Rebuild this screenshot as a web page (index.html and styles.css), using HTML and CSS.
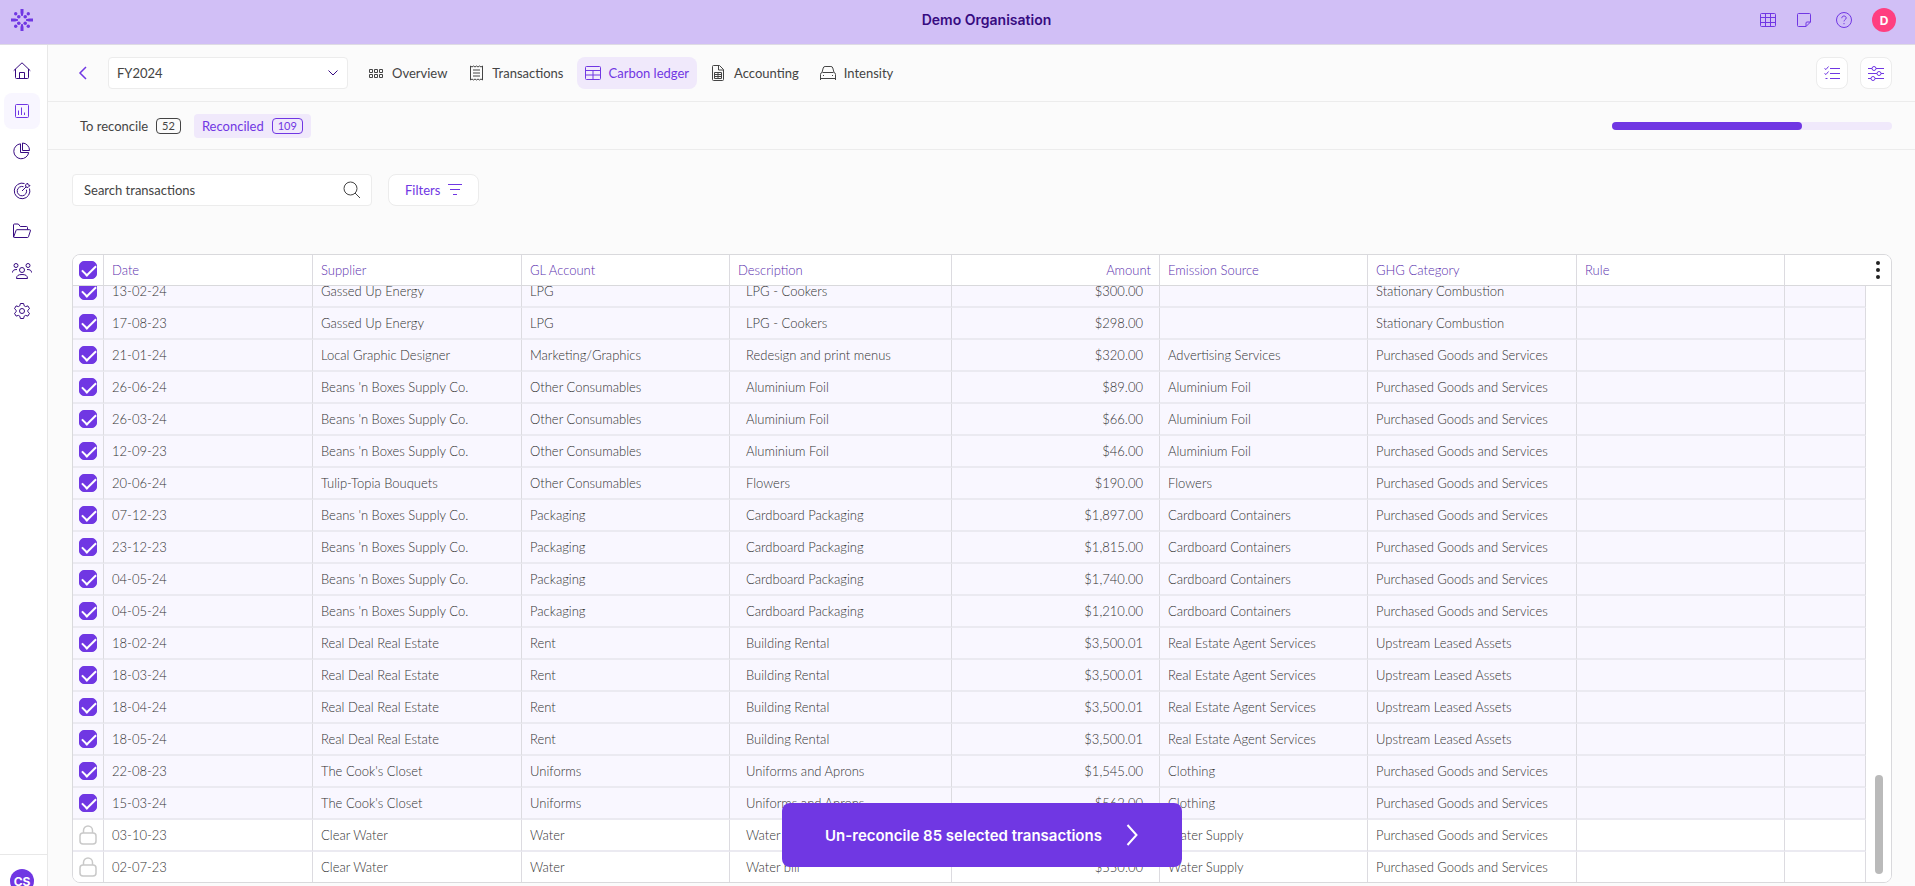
FILE: index.html
```html
<!DOCTYPE html>
<html lang="en">
<head>
  <meta charset="UTF-8" />
  <meta name="viewport" content="width=device-width, initial-scale=1" />
  <title>Carbon ledger</title>
  <link rel="stylesheet" href="styles.css">
</head>
<body>

<header class="topbar">
  <a class="logo" href="#" aria-label="Home">
    <svg width="22" height="22" viewBox="0 0 22 22" fill="currentColor">
      <path d="M9.500 0h3v4l-.8 3h-1.400l-.8-3zM9.500 22h3v-4l-.8-3h-1.400l-.8 3zM0 9.500h4l3 .8v1.400l-3 .8H0zM22 9.500h-4l-3 .8v1.400l3 .8h4z"/>
      <circle cx="4.700" cy="4.700" r="1.700"/><circle cx="17.300" cy="4.700" r="1.700"/>
      <circle cx="4.700" cy="17.300" r="1.700"/><circle cx="17.300" cy="17.300" r="1.700"/>
      <circle cx="7.800" cy="7.800" r="1.800"/><circle cx="14.200" cy="7.800" r="1.800"/>
      <circle cx="7.800" cy="14.200" r="1.800"/><circle cx="14.200" cy="14.200" r="1.800"/>
    </svg>
  </a>
  <h1 class="org">Demo Organisation</h1>
  <div class="actions">
    <button type="button" aria-label="Data tables">
      <svg width="16" height="16" viewBox="0 0 16 16"><rect x=".5" y="1.500" width="15" height="13" rx="1"/><path d="M.5 5.500h15M.5 10.500h15M5.500 1.500v13M10.500 1.500v13"/></svg>
    </button>
    <button type="button" aria-label="Notes">
      <svg width="20" height="16" viewBox="0 0 20 16"><path d="M2.500 1.500h11a1 1 0 0 1 1 1V10l-4.500 4.500H2.500a1 1 0 0 1-1-1v-11a1 1 0 0 1 1-1zM14.500 10h-3.500a1 1 0 0 0-1 1v3.500"/></svg>
    </button>
    <button type="button" aria-label="Help">
      <svg width="16" height="16" viewBox="0 0 16 16"><circle cx="8" cy="8" r="7.500"/><path d="M5.800 6.200c0-1.400 1-2.200 2.200-2.200s2.200.8 2.200 2c0 1.600-2.200 1.700-2.200 3.400M8 11v1.200"/></svg>
    </button>
    <button type="button" class="avatar avatar-user">D</button>
  </div>
</header>

<div class="layout">
  <nav class="sidebar">
    <div class="side-links">
      <a href="#" aria-label="Home"><svg width="18" height="18" viewBox="0 0 18 18"><path d="M.7 8.700 9 .8l8.300 7.900M2.500 7v8.500a1 1 0 0 0 1 1h11a1 1 0 0 0 1-1V7M6.500 16.500v-6h5v6"/></svg></a>
      <a href="#" class="active" aria-label="Reports"><svg width="18" height="18" viewBox="0 0 18 18"><rect x="2.500" y="2.500" width="13" height="13" rx="1"/><path d="M5.500 8.500v4.500M8.500 5.500v7.500M11.500 10.500v2.500" /></svg></a>
      <a href="#" aria-label="Breakdown"><svg width="18" height="18" viewBox="0 0 18 18"><path d="M7.500 1.800a7.500 7.500 0 1 0 8.200 8.700H7.500z"/><path d="M9.500 1v7.500h7A7.300 7.300 0 0 0 9.500 1z"/></svg></a>
      <a href="#" aria-label="Targets"><svg width="18" height="18" viewBox="0 0 18 18"><path d="M11.500 1.500A7.800 7.800 0 1 0 16.500 6.500"/><path d="M10.500 4.700a4.700 4.700 0 1 0 2.900 3M9 9l4-4M13 5l-.5-2L14.500 1l.6 1.900L17 3.500 15 5.500z"/></svg></a>
      <a href="#" aria-label="Documents"><svg width="18" height="18" viewBox="0 0 18 18"><path d="M.5 15V3a1 1 0 0 1 1-1h3.800l2 2.500h6.200a1 1 0 0 1 1 1v2M.6 15.200 3 8.500a1 1 0 0 1 1-.8h12.500a.9.900 0 0 1 .9 1.200l-1.900 5.800a1 1 0 0 1-1 .8H1.200a.6.600 0 0 1-.6-.3z"/></svg></a>
      <a href="#" aria-label="Team"><svg width="20" height="18" viewBox="0 0 20 18"><circle cx="10" cy="8" r="2.500"/><circle cx="4" cy="3.500" r="2"/><circle cx="16" cy="3.500" r="2"/><path d="M4.500 16.500c0-3 2-4 5.500-4s5.500 1 5.500 4zM.5 10.500c0-2.200 1.500-3 4.500-3M19.500 10.500c0-2.200-1.500-3-4.500-3"/></svg></a>
      <a href="#" aria-label="Settings"><svg width="18" height="18" viewBox="0 0 18 18"><circle cx="9" cy="9" r="2.500"/><path d="M7.400 1.500h3.200l.6 2.300 1.400.8 2.300-.7 1.600 2.800-1.700 1.600v1.400l1.700 1.600-1.600 2.800-2.300-.7-1.400.8-.6 2.300H7.400l-.6-2.300-1.400-.8-2.300.7-1.600-2.800 1.700-1.600V8.300L1.500 6.700l1.600-2.800 2.300.7 1.400-.8z"/></svg></a>
    </div>
    <div class="side-footer">
      <button type="button" class="avatar">CS</button>
    </div>
  </nav>

  <main class="main">
    <div class="toolbar">
      <a class="back" href="#" aria-label="Back"><svg width="10" height="14" viewBox="0 0 10 14"><path d="M8 1 2 7l6 6"/></svg></a>
      <div class="year">
        <select aria-label="Reporting year"><option>FY2024</option></select>
        <svg width="12" height="8" viewBox="0 0 12 8"><path d="M1.500 1.500 6 6l4.500-4.500"/></svg>
      </div>
      <nav class="tabs">
        <a href="#"><svg width="16" height="16" viewBox="0 0 16 16"><path d="M1.500 4.500h3v3h-3zM6.500 4.500h3v3h-3zM11.500 4.500h3v3h-3zM1.500 9.500h3v3h-3zM6.500 9.500h3v3h-3zM11.500 9.500h3v3h-3z"/></svg>Overview</a>
        <a href="#"><svg width="16" height="16" viewBox="0 0 16 16"><path d="M2.500 1v14M14.500 1v14M2.500 1l1.500 1 1.500-1L7 2l1.500-1L10 2l1.500-1L13 2l1.500-1M2.500 15l1.500-1 1.500 1L7 14l1.500 1 1.500-1 1.500 1 1.500-1 1.500 1M5 5h7M5 8h7M5 11h7"/></svg>Transactions</a>
        <a href="#" class="active"><svg width="16" height="16" viewBox="0 0 16 16"><rect x=".5" y="1.500" width="15" height="13" rx="1"/><path d="M.5 5.500h15M.5 10h15M8 5.500v9"/></svg>Carbon ledger</a>
        <a href="#"><svg width="16" height="16" viewBox="0 0 16 16"><path d="M9.500.5h-6a1 1 0 0 0-1 1v13a1 1 0 0 0 1 1h9a1 1 0 0 0 1-1v-10zM8.500.5v4.500h5M4.500 7.500h7v6h-7zM4.500 9.500h7M4.500 11.500h7M8 7.500v6"/></svg>Accounting</a>
        <a href="#"><svg width="16" height="16" viewBox="0 0 16 16"><path d="M.5 15V9.500a2 2 0 0 1 1.500-2L3.200 3a2 2 0 0 1 1.900-1.500h5.800A2 2 0 0 1 12.800 3L14 7.500a2 2 0 0 1 1.500 2V15M2.500 7.500h11M.5 13.500h15M3 10.500h1M12 10.500h1"/></svg>Intensity</a>
      </nav>
      <div class="tools">
        <button type="button" class="icon-button" aria-label="Checklist"><svg width="16" height="16" viewBox="0 0 16 16"><path d="M6 3.500h10M6 8.500h10M6 13.500h10M.5 3.500l1.500 1 2.500-3M.5 8.500l1.500 1 2.500-3M1.500 13.500h2"/></svg></button>
        <button type="button" class="icon-button" aria-label="Adjust"><svg width="16" height="16" viewBox="0 0 16 16"><path d="M0 3.500h4M8 3.500h8M0 8.500h9M13 8.500h3M0 13.500h3M7 13.500h9"/><circle cx="6" cy="3.500" r="2"/><circle cx="11" cy="8.500" r="2"/><circle cx="5" cy="13.500" r="2"/></svg></button>
      </div>
    </div>

    <div class="status">
      <a href="#">To reconcile <span class="count">52</span></a>
      <a href="#" class="active">Reconciled <span class="count">109</span></a>
      <div class="progress" role="progressbar" aria-label="Reconciled" aria-valuenow="68">
        <div class="progress-fill" style="width: 67.7%"></div>
      </div>
    </div>

    <div class="filters">
      <div class="search">
        <input type="text" placeholder="Search transactions" aria-label="Search transactions">
        <svg width="18" height="18" viewBox="0 0 18 18"><circle cx="7.500" cy="7.500" r="6.500"/><path d="M12 12l5 5"/></svg>
      </div>
      <button type="button" class="filter-button">Filters <svg width="14" height="12" viewBox="0 0 14 12"><path d="M0 .5h14M2 5.500h10M5 10.500h4"/></svg></button>
    </div>

    <div class="grid">
      <div class="grid-scroll">
        <table>
          <colgroup>
            <col class="c-check"><col class="c-b"><col class="c-b"><col class="c-a"><col class="c-desc"><col class="c-a">
            <col class="c-a"><col class="c-b"><col class="c-a"><col class="c-blank"><col class="c-gutter">
          </colgroup>
          <thead>
            <tr>
              <th><input type="checkbox" aria-label="Select all" checked></th>
              <th>Date</th><th>Supplier</th><th>GL Account</th><th>Description</th><th class="num">Amount</th>
              <th>Emission Source</th><th>GHG Category</th><th>Rule</th>
              <th colspan="2" class="menu-cell"><button type="button" aria-label="Table menu"><svg width="4" height="18" viewBox="0 0 4 18"><circle cx="2" cy="2" r="2"/><circle cx="2" cy="9" r="2"/><circle cx="2" cy="16" r="2"/></svg></button></th>
            </tr>
          </thead>
          <tbody>
            <tr><td><input type="checkbox" aria-label="Select row" checked></td><td>13-02-24</td><td>Gassed Up Energy</td><td>LPG</td><td class="desc">LPG - Cookers</td><td class="num">$300.00</td><td></td><td>Stationary Combustion</td><td></td><td></td><td></td></tr>
            <tr><td><input type="checkbox" aria-label="Select row" checked></td><td>17-08-23</td><td>Gassed Up Energy</td><td>LPG</td><td class="desc">LPG - Cookers</td><td class="num">$298.00</td><td></td><td>Stationary Combustion</td><td></td><td></td><td></td></tr>
            <tr><td><input type="checkbox" aria-label="Select row" checked></td><td>21-01-24</td><td>Local Graphic Designer</td><td>Marketing/Graphics</td><td class="desc">Redesign and print menus</td><td class="num">$320.00</td><td>Advertising Services</td><td>Purchased Goods and Services</td><td></td><td></td><td></td></tr>
            <tr><td><input type="checkbox" aria-label="Select row" checked></td><td>26-06-24</td><td>Beans 'n Boxes Supply Co.</td><td>Other Consumables</td><td class="desc">Aluminium Foil</td><td class="num">$89.00</td><td>Aluminium Foil</td><td>Purchased Goods and Services</td><td></td><td></td><td></td></tr>
            <tr><td><input type="checkbox" aria-label="Select row" checked></td><td>26-03-24</td><td>Beans 'n Boxes Supply Co.</td><td>Other Consumables</td><td class="desc">Aluminium Foil</td><td class="num">$66.00</td><td>Aluminium Foil</td><td>Purchased Goods and Services</td><td></td><td></td><td></td></tr>
            <tr><td><input type="checkbox" aria-label="Select row" checked></td><td>12-09-23</td><td>Beans 'n Boxes Supply Co.</td><td>Other Consumables</td><td class="desc">Aluminium Foil</td><td class="num">$46.00</td><td>Aluminium Foil</td><td>Purchased Goods and Services</td><td></td><td></td><td></td></tr>
            <tr><td><input type="checkbox" aria-label="Select row" checked></td><td>20-06-24</td><td>Tulip-Topia Bouquets</td><td>Other Consumables</td><td class="desc">Flowers</td><td class="num">$190.00</td><td>Flowers</td><td>Purchased Goods and Services</td><td></td><td></td><td></td></tr>
            <tr><td><input type="checkbox" aria-label="Select row" checked></td><td>07-12-23</td><td>Beans 'n Boxes Supply Co.</td><td>Packaging</td><td class="desc">Cardboard Packaging</td><td class="num">$1,897.00</td><td>Cardboard Containers</td><td>Purchased Goods and Services</td><td></td><td></td><td></td></tr>
            <tr><td><input type="checkbox" aria-label="Select row" checked></td><td>23-12-23</td><td>Beans 'n Boxes Supply Co.</td><td>Packaging</td><td class="desc">Cardboard Packaging</td><td class="num">$1,815.00</td><td>Cardboard Containers</td><td>Purchased Goods and Services</td><td></td><td></td><td></td></tr>
            <tr><td><input type="checkbox" aria-label="Select row" checked></td><td>04-05-24</td><td>Beans 'n Boxes Supply Co.</td><td>Packaging</td><td class="desc">Cardboard Packaging</td><td class="num">$1,740.00</td><td>Cardboard Containers</td><td>Purchased Goods and Services</td><td></td><td></td><td></td></tr>
            <tr><td><input type="checkbox" aria-label="Select row" checked></td><td>04-05-24</td><td>Beans 'n Boxes Supply Co.</td><td>Packaging</td><td class="desc">Cardboard Packaging</td><td class="num">$1,210.00</td><td>Cardboard Containers</td><td>Purchased Goods and Services</td><td></td><td></td><td></td></tr>
            <tr><td><input type="checkbox" aria-label="Select row" checked></td><td>18-02-24</td><td>Real Deal Real Estate</td><td>Rent</td><td class="desc">Building Rental</td><td class="num">$3,500.01</td><td>Real Estate Agent Services</td><td>Upstream Leased Assets</td><td></td><td></td><td></td></tr>
            <tr><td><input type="checkbox" aria-label="Select row" checked></td><td>18-03-24</td><td>Real Deal Real Estate</td><td>Rent</td><td class="desc">Building Rental</td><td class="num">$3,500.01</td><td>Real Estate Agent Services</td><td>Upstream Leased Assets</td><td></td><td></td><td></td></tr>
            <tr><td><input type="checkbox" aria-label="Select row" checked></td><td>18-04-24</td><td>Real Deal Real Estate</td><td>Rent</td><td class="desc">Building Rental</td><td class="num">$3,500.01</td><td>Real Estate Agent Services</td><td>Upstream Leased Assets</td><td></td><td></td><td></td></tr>
            <tr><td><input type="checkbox" aria-label="Select row" checked></td><td>18-05-24</td><td>Real Deal Real Estate</td><td>Rent</td><td class="desc">Building Rental</td><td class="num">$3,500.01</td><td>Real Estate Agent Services</td><td>Upstream Leased Assets</td><td></td><td></td><td></td></tr>
            <tr><td><input type="checkbox" aria-label="Select row" checked></td><td>22-08-23</td><td>The Cook's Closet</td><td>Uniforms</td><td class="desc">Uniforms and Aprons</td><td class="num">$1,545.00</td><td>Clothing</td><td>Purchased Goods and Services</td><td></td><td></td><td></td></tr>
            <tr><td><input type="checkbox" aria-label="Select row" checked></td><td>15-03-24</td><td>The Cook's Closet</td><td>Uniforms</td><td class="desc">Uniforms and Aprons</td><td class="num">$562.00</td><td>Clothing</td><td>Purchased Goods and Services</td><td></td><td></td><td></td></tr>
            <tr class="locked"><td><svg class="lock" width="18" height="20" viewBox="0 0 18 20"><rect x="1" y="8" width="16" height="11" rx="3"/><path d="M4.500 8V5.500a4.500 4.500 0 0 1 9 0V8"/></svg></td><td>03-10-23</td><td>Clear Water</td><td>Water</td><td class="desc">Water</td><td class="num"></td><td>Water Supply</td><td>Purchased Goods and Services</td><td></td><td></td><td></td></tr>
            <tr class="locked"><td><svg class="lock" width="18" height="20" viewBox="0 0 18 20"><rect x="1" y="8" width="16" height="11" rx="3"/><path d="M4.500 8V5.500a4.500 4.500 0 0 1 9 0V8"/></svg></td><td>02-07-23</td><td>Clear Water</td><td>Water</td><td class="desc">Water bill</td><td class="num">$550.00</td><td>Water Supply</td><td>Purchased Goods and Services</td><td></td><td></td><td></td></tr>
          </tbody>
        </table>
      </div>
      <div class="scroll-thumb"></div>
    </div>

    <button type="button" class="unreconcile">Un-reconcile 85 selected transactions
      <svg width="12" height="24" viewBox="0 0 12 24"><path d="M1.500 2 10.500 12l-9 10"/></svg>
    </button>
  </main>
</div>

</body>
</html>
```
FILE: styles.css
```css
* {
  box-sizing: border-box;
}
body {
  margin: 0;
  height: 100vh;
  display: flex;
  flex-direction: column;
  overflow: hidden;
  background-color: #fbfbfb;
  color: #444;
  font-family: Lato, "Liberation Sans", sans-serif;
  font-size: 13px;
}
a {
  color: inherit;
  text-decoration: none;
}
button, input, select {
  font: inherit;
  color: inherit;
}
button {
  padding: 0;
  border: 0;
  background: none;
  cursor: pointer;
}
svg {
  display: block;
  flex: none;
  fill: none;
  stroke: currentColor;
}

/* top bar */
.topbar {
  flex: none;
  display: flex;
  align-items: center;
  height: 45px;
  padding: 0 19px 4px 11px;
  background-color: #d1bff6;
  border-bottom: 1px solid #dedbe4;
}
.logo {
  color: #7037e3;
}
.logo svg {
  fill: currentColor;
  stroke: none;
}
.org {
  flex: 1;
  margin: 0;
  padding-left: 180px;
  text-align: center;
  font-family: Inter, "Liberation Sans", sans-serif;
  font-size: 14px;
  font-weight: 600;
  line-height: 20px;
  color: #370b81;
}
.actions {
  display: flex;
  align-items: center;
  gap: 20px;
  color: #7037e3;
}
.avatar {
  width: 24px;
  height: 24px;
  border-radius: 50%;
  background-color: #7037e3;
  color: #fff;
  font-family: Inter, "Liberation Sans", sans-serif;
  font-size: 12px;
  font-weight: 700;
}
.avatar-user {
  background-color: #ff3f80;
}

.layout {
  flex: 1;
  display: flex;
  min-height: 0;
  overflow: hidden;
}

/* sidebar */
.sidebar {
  flex: none;
  display: flex;
  flex-direction: column;
  justify-content: space-between;
  width: 48px;
  height: 100vh;
  background-color: #fff;
  border-right: 1px solid #e8e8e8;
  color: #370b81;
}
.side-links {
  display: flex;
  flex-direction: column;
  gap: 4px;
  padding: 8px 4px;
}
.side-links a {
  display: flex;
  align-items: center;
  justify-content: center;
  width: 36px;
  height: 36px;
  border-radius: 8px;
}
.side-links .active {
  background-color: #f8f6ff;
  color: #7037e3;
}
.side-footer {
  height: 77px;
  padding: 14px 10px;
  border-top: 1px solid #e8e8e8;
}

/* main */
.main {
  position: relative;
  flex: 1;
  min-width: 0;
  display: flex;
  flex-direction: column;
}
.toolbar {
  flex: none;
  display: flex;
  align-items: center;
  height: 57px;
  padding: 0 23px 0 30px;
  border-bottom: 1px solid #ececec;
}
.back {
  margin-right: 20px;
  color: #7037e3;
}
.back svg {
  stroke-width: 1.500;
}
.year {
  position: relative;
  width: 240px;
}
.year select {
  width: 100%;
  height: 32px;
  padding: 0 8px;
  border: 1px solid #ececec;
  border-radius: 4px;
  background-color: #fff;
  appearance: none;
}
.year svg {
  position: absolute;
  right: 9px;
  top: 12px;
  color: #370b81;
  pointer-events: none;
}
.tabs {
  display: flex;
  gap: 5px;
  padding-left: 12px;
}
.tabs a {
  display: flex;
  align-items: center;
  gap: 8px;
  height: 32px;
  padding: 0 8px;
  border-radius: 8px;
}
.tabs .active {
  background-color: #f0e9fb;
  color: #7037e3;
}
.tools {
  display: flex;
  gap: 12px;
  margin-left: auto;
}
.icon-button {
  display: flex;
  align-items: center;
  justify-content: center;
  width: 32px;
  height: 32px;
  border: 1px solid #ececec;
  border-radius: 8px;
  background-color: #fff;
  color: #7037e3;
}

.status {
  flex: none;
  display: flex;
  align-items: center;
  gap: 5px;
  height: 48px;
  padding: 0 23px 0 24px;
  border-bottom: 1px solid #ececec;
}
.status a {
  display: flex;
  align-items: center;
  gap: 8px;
  height: 24px;
  padding: 0 8px;
  border-radius: 4px;
}
.status .active {
  background-color: #f0e9fb;
  color: #7037e3;
}
.count {
  min-width: 24px;
  padding: 0 5px;
  border: 1px solid currentColor;
  border-radius: 4px;
  font-size: 11px;
  line-height: 14px;
  text-align: center;
}
.progress {
  width: 280px;
  height: 8px;
  margin-left: auto;
  border-radius: 4px;
  background-color: #f0e9fb;
}
.progress-fill {
  height: 100%;
  border-radius: 4px;
  background-color: #7037e3;
}

.filters {
  flex: none;
  display: flex;
  gap: 16px;
  padding: 24px 24px 48px;
}
.search {
  position: relative;
  width: 300px;
}
.search input {
  width: 100%;
  height: 32px;
  padding: 0 40px 0 11px;
  border: 1px solid #ececec;
  border-radius: 4px;
  background-color: #fff;
}
.search input::placeholder {
  color: #444;
}
.search svg {
  position: absolute;
  right: 11px;
  top: 7px;
}
.filter-button {
  display: flex;
  align-items: center;
  gap: 8px;
  height: 32px;
  padding: 0 16px;
  border: 1px solid #ececec;
  border-radius: 8px;
  background-color: #fff;
  color: #7037e3;
}

/* table */
.grid {
  position: relative;
  flex: 1;
  min-height: 0;
  margin: 0 23px 3px 24px;
  border: 1px solid #d9d9dc;
  border-radius: 8px;
  background-color: #fff;
  overflow: hidden;
}
/* column-reverse keeps the list scrolled to its end */
.grid-scroll {
  display: flex;
  flex-direction: column-reverse;
  height: 100%;
  overflow: auto;
  scrollbar-width: none;
}
table {
  flex: none;
  width: 100%;
  min-width: 1200px;
  table-layout: fixed;
  border-collapse: separate;
  border-spacing: 0;
}
.c-check { width: 31px; }
.c-a { width: 208px; }
.c-b { width: 209px; }
.c-desc { width: 222px; }
.c-blank { width: 81px; }
.c-gutter { width: 25px; }

th, td {
  height: 32px;
  padding: 0 8px;
  border-right: 1px solid #dcdbe0;
  text-align: left;
  font-weight: 300;
  white-space: nowrap;
}
th {
  position: sticky;
  top: 0;
  z-index: 1;
  height: 31px;
  background-color: #fff;
  border-bottom: 1px solid #d9d9dc;
  color: #5a2fae;
}
td {
  border-bottom: 2px solid #ebeaf1;
  background-color: #f9f7ff;
  color: #333;
}
.locked td {
  background-color: #fff;
}
th:first-child, td:first-child {
  padding: 0 6px;
}
td:last-child {
  border: 0;
  background-color: #fff;
}
tbody tr:last-child td {
  height: 30px;
  border-bottom: 0;
}
.desc {
  padding-left: 16px;
}
.num {
  text-align: right;
}
td.num {
  padding-right: 16px;
}
.menu-cell {
  padding-right: 11px;
  border-right: 0;
  color: #222;
}
.menu-cell button {
  display: block;
  margin-left: auto;
}
.menu-cell svg {
  fill: currentColor;
  stroke: none;
}
.lock {
  color: #c9c9c9;
  stroke-width: 1.500;
}
input[type="checkbox"] {
  display: block;
  position: relative;
  width: 18px;
  height: 18px;
  margin: 0;
  border: 1px solid #7037e3;
  border-radius: 5px;
  appearance: none;
}
input[type="checkbox"]:checked {
  background-color: #7037e3;
}
input[type="checkbox"]:checked::after {
  content: "";
  position: absolute;
  left: 5px;
  top: 0;
  width: 6px;
  height: 12px;
  border: solid #fff;
  border-width: 0 2px 2px 0;
  transform: rotate(45deg);
}
.scroll-thumb {
  position: absolute;
  right: 8px;
  bottom: 8px;
  width: 8px;
  height: 99px;
  border-radius: 4px;
  background-color: #bababa;
}

.unreconcile {
  position: absolute;
  left: 50%;
  bottom: 19px;
  z-index: 2;
  display: flex;
  align-items: center;
  justify-content: center;
  gap: 24px;
  width: 400px;
  height: 64px;
  transform: translateX(-50%);
  border-radius: 8px;
  background-color: #7037e3;
  color: #fff;
  font-family: Inter, "Liberation Sans", sans-serif;
  font-size: 15px;
  font-weight: 600;
}
.unreconcile svg {
  stroke-width: 2;
}
```
